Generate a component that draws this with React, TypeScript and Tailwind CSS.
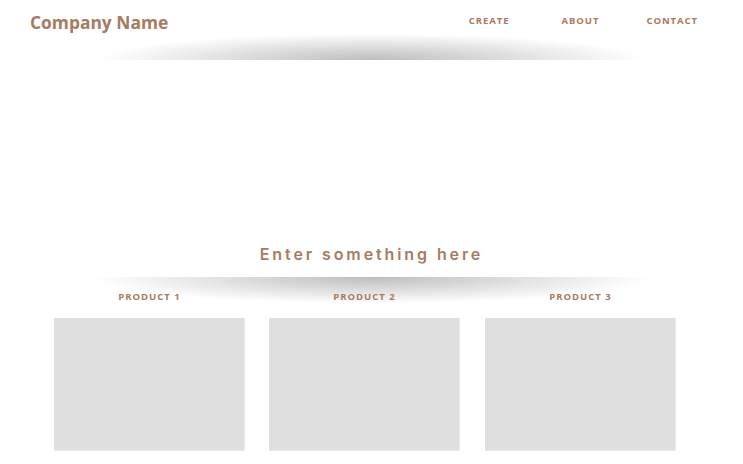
const NAV = ['CREATE', 'ABOUT', 'CONTACT']
const PRODUCTS = ['PRODUCT 1', 'PRODUCT 2', 'PRODUCT 3']

export default function App() {
  return (
    <div className="min-h-screen bg-white font-['Open_Sans',sans-serif] text-[#a67b60]">
      {/* Header with curved shadow underneath */}
      <header className="h-[60px] bg-[radial-gradient(ellipse_at_bottom,rgba(0,0,0,0.26),rgba(0,0,0,0)_72%)] bg-[length:540px_26px] bg-bottom bg-no-repeat">
        <div className="flex h-[45px] items-center justify-between pl-[30px] pr-[45px]">
          <h1 className="text-[17.4px] font-bold leading-none">Company Name</h1>
          <nav className="flex items-center gap-[47px] -mt-[3px]">
            {NAV.map((item, i) => (
              <a
                key={item}
                href="#"
                className={`text-[9.5px] font-bold tracking-[0.95px] leading-none ${i === 0 ? 'mr-[5px]' : ''}`}
              >
                {item}
              </a>
            ))}
          </nav>
        </div>
      </header>

      <section className="pt-[182px]">
        <h2 className="text-center font-['Inter',sans-serif] text-[16px] font-semibold leading-[24px] tracking-[2.9px]">
          Enter something here
        </h2>
      </section>

      {/* Products */}
      <section className="mt-[11px] bg-[radial-gradient(ellipse_at_top,rgba(0,0,0,0.26),rgba(0,0,0,0)_72%)] bg-[length:550px_26px] bg-top bg-no-repeat pt-[13px] pl-[54px]">
        <div className="flex gap-[24px]">
          {PRODUCTS.map((name, i) => (
            <div key={name} className={`flex w-[191px] flex-col items-center gap-[14px] ${i === 2 ? 'ml-px' : ''}`}>
              <h3 className="text-[9.5px] font-bold leading-[14px] tracking-[1px]">{name}</h3>
              <div className="h-[133px] w-full border-r border-b border-[#ececec] bg-[#dfdfdf]" />
            </div>
          ))}
        </div>
      </section>
    </div>
  )
}
